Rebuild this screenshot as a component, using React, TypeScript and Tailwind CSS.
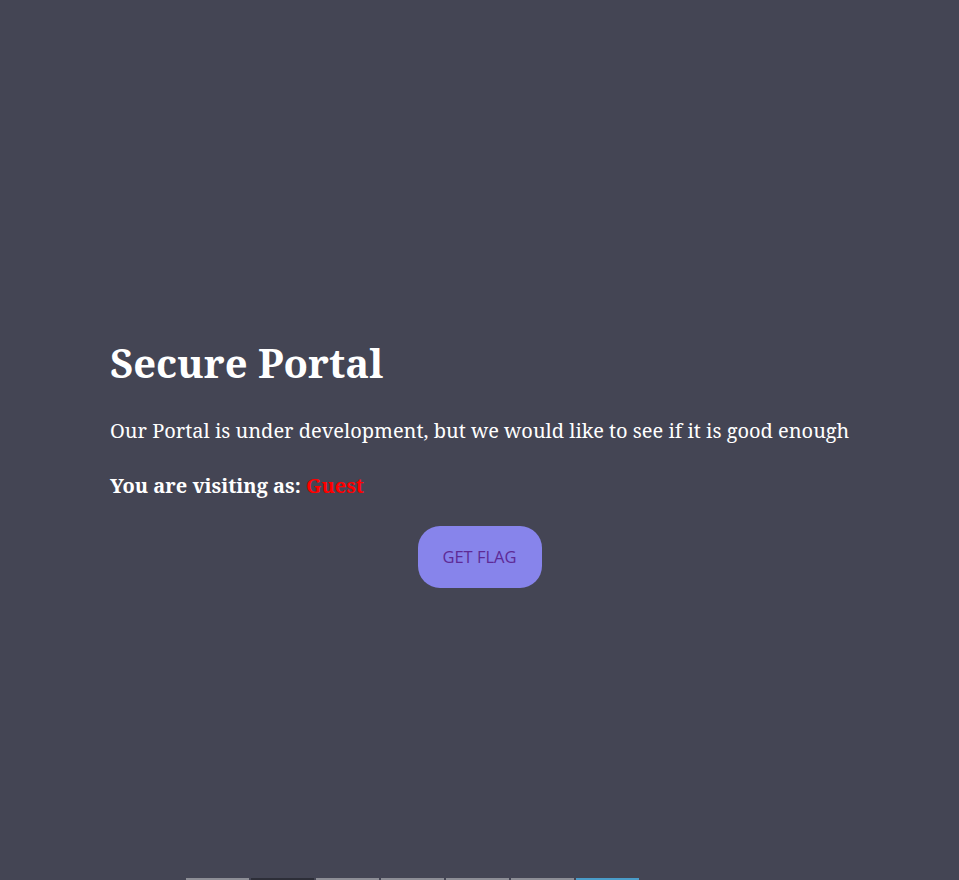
export default function App() {
  const tabs = [
    'bg-[#8d8e96]',
    'bg-[#2d2e38]',
    'bg-[#8d8e96]',
    'bg-[#8d8e96]',
    'bg-[#8d8e96]',
    'bg-[#8d8e96]',
    'bg-[#4a9cc9]',
  ];

  return (
    <div className="min-h-screen bg-[#444554] text-white" style={{ fontFamily: '"Noto Serif", "DejaVu Serif", serif' }}>
      <main className="h-[878px] flex flex-col justify-center pl-[110px] pr-[80px] pt-[48px]">
        <h1 className="text-[40px] font-bold leading-tight">Secure Portal</h1>
        <p className="mt-[28px] text-[20px]">Our Portal is under development, but we would like to see if it is good enough</p>
        <p className="mt-[25px] text-[20px] font-bold">
          You are visiting as: <span className="text-[#ff0000]">Guest</span>
        </p>
        <div className="mt-[25px] flex justify-center pr-[30px]">
          <button
            className="w-[124px] h-[62px] rounded-[22px] bg-[#8784eb] text-[#5e2a96] text-[16.5px]"
            style={{ fontFamily: '"Open Sans", "Noto Sans", sans-serif' }}
          >
            GET FLAG
          </button>
        </div>
      </main>
      <div className="flex gap-[2px] pl-[186px] h-[20px]">
        {tabs.map((c, i) => (
          <div key={i} className={`w-[63px] h-[2px] ${c}`} />
        ))}
      </div>
    </div>
  );
}
